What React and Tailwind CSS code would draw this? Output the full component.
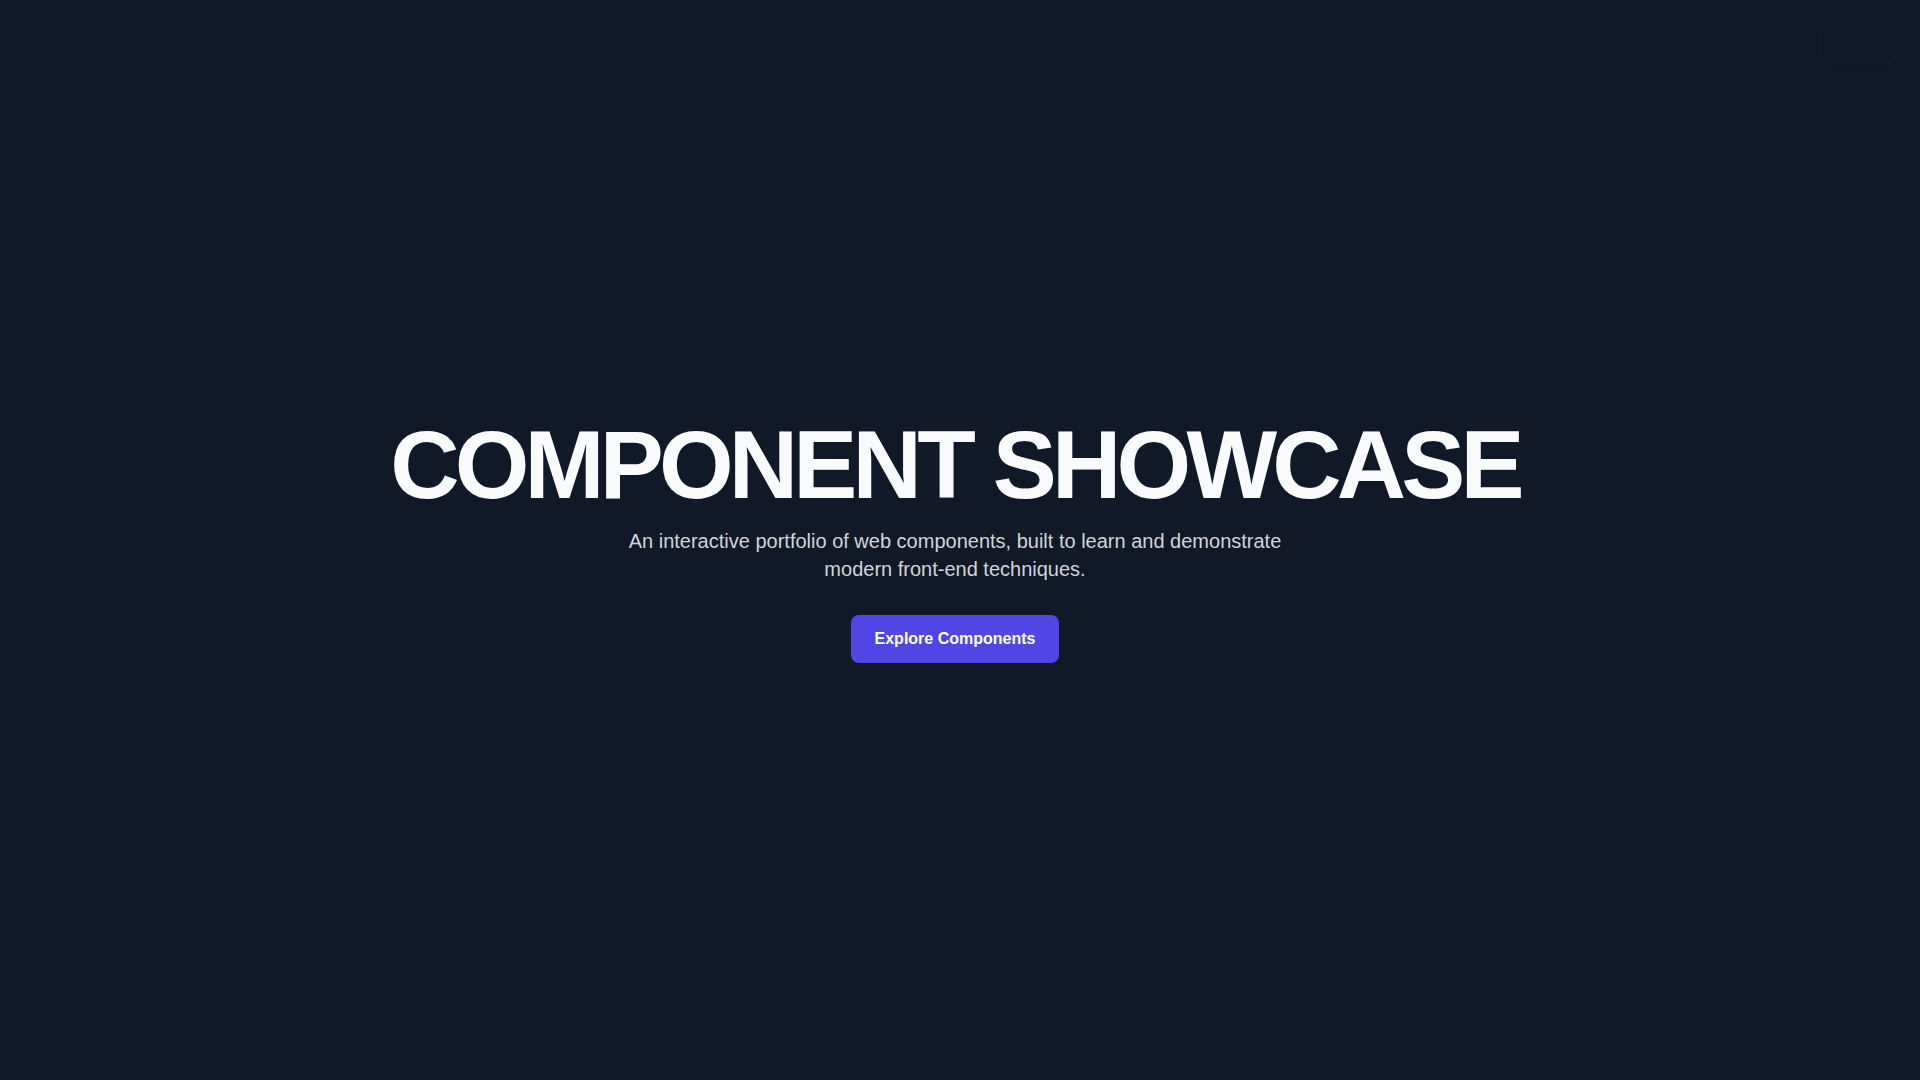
export default function App() {
  return (
    <div className="min-h-screen bg-[#111827] pr-[10px] font-['Liberation_Sans',Arial,sans-serif] text-[#f9fafb]">
      <div className="relative">
        {/* faint toggle in the corner */}
        <div className="absolute top-5 right-[12px] h-[47px] w-[75px] rounded-xl border border-black/10 bg-white/[0.008]" />

        <section className="flex h-screen flex-col items-center justify-center px-6 text-center">
          <h1 className="text-8xl leading-none font-bold tracking-tighter text-[#f9fafb]">
            COMPONENT SHOWCASE
          </h1>
          <p className="mt-3.5 max-w-2xl text-xl text-[#d1d5db]">
            An interactive portfolio of web components, built to learn and demonstrate
            modern front-end techniques.
          </p>
          <button className="mt-8 rounded-lg bg-[#4f46e5] px-6 py-3 text-base font-semibold text-white hover:bg-[#6366f1] transition-colors duration-200">
            Explore Components
          </button>
        </section>

        <section className="h-[287px]" />
      </div>
    </div>
  );
}
